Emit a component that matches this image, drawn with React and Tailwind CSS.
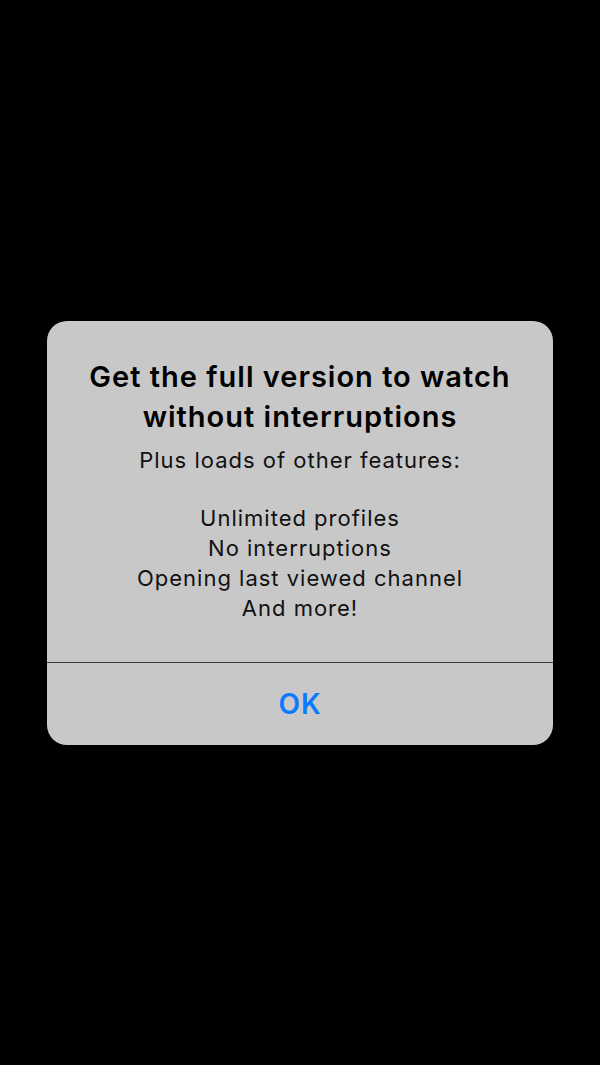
import React from 'react';

const features = ['Unlimited profiles', 'No interruptions', 'Opening last viewed channel', 'And more!'];

const App = () => {
  return (
    <div
      className="w-[600px] h-[1065px] bg-black flex items-center justify-center"
      style={{ fontFamily: 'Inter, "Noto Sans", sans-serif' }}
    >
      <div className="w-[506px] h-[424px] bg-[#c8c8c8] rounded-[20px] flex flex-col overflow-hidden">
        <div className="h-[341px] flex flex-col items-center pt-[36px] text-center">
          <h1 className="text-[29px] leading-[40px] font-semibold text-black tracking-[1px]">
            Get the full version to watch
            <br />
            without interruptions
          </h1>
          <div className="mt-[8px] text-[22px] leading-[30px] text-[#111] tracking-[1px]">
            <p>Plus loads of other features:</p>
            <p className="h-[28px]"></p>
            {features.map(f => (
              <p key={f}>{f}</p>
            ))}
          </div>
        </div>
        <div className="h-px bg-[#3c3c3c]" />
        <button className="flex-1 flex items-center justify-center text-[28px] font-semibold text-[#0a7aff] tracking-[1px]">
          OK
        </button>
      </div>
    </div>
  );
};

export default App;
